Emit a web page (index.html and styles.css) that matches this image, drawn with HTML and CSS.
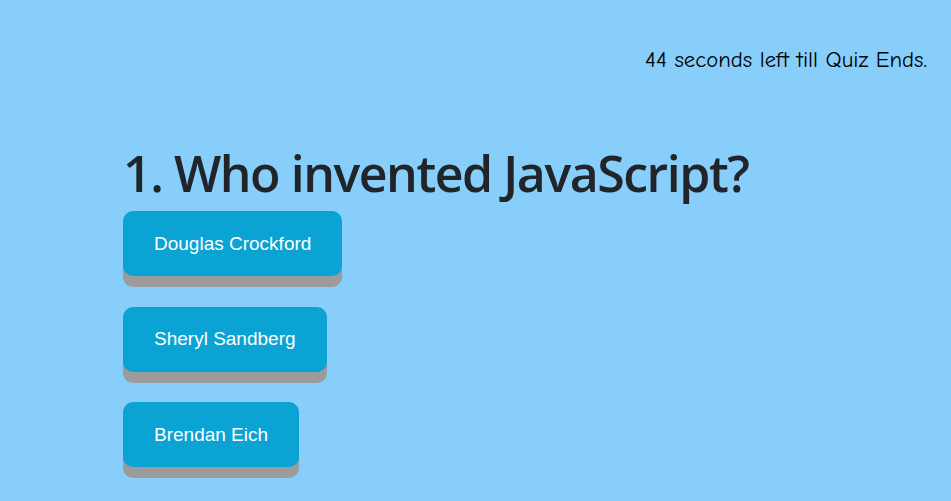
FILE: index.html
```html
<!DOCTYPE html>
<html>
<head>
<meta charset="utf-8">
<link rel="stylesheet" href="styles.css">
</head>
<body>
<div class="page">
  <div class="timer">44 seconds left till Quiz Ends.</div>
  <div class="quiz">
    <h1 class="question">1. Who invented JavaScript?</h1>
    <div class="answers">
      <button class="answer">Douglas Crockford</button>
      <button class="answer">Sheryl Sandberg</button>
      <button class="answer">Brendan Eich</button>
    </div>
  </div>
</div>
</body>
</html>
```
FILE: styles.css
```css
html, body {
  margin: 0;
  padding: 0;
  background: #87cefa;
  height: 100%;
}
.page {
  display: flex;
  flex-direction: column;
  padding: 0 24px 0 123px;
}
.timer {
  align-self: flex-end;
  margin-top: 46px;
  font-family: "Comic Sans MS", "Comic Neue", "DejaVu Sans", sans-serif;
  font-size: 22.7px;
  line-height: 28px;
  color: #000;
}
.quiz {
  margin-top: 67px;
}
.question {
  margin: 0;
  font-family: "Open Sans", "Noto Sans", sans-serif;
  font-weight: 600;
  font-size: 50px;
  letter-spacing: -1.45px;
  line-height: 64px;
  color: #212529;
}
.answers {
  display: flex;
  flex-direction: column;
  align-items: flex-start;
  gap: 30.5px;
  margin-top: 6px;
}
.answer {
  border: none;
  background: #0aa3d4;
  color: #fff;
  font-family: "Liberation Sans", Arial, sans-serif;
  font-size: 19px;
  height: 65px;
  padding: 0 31px;
  border-radius: 10px;
  box-shadow: 0 11px 0 #9b9b9b;
  cursor: pointer;
}
```
